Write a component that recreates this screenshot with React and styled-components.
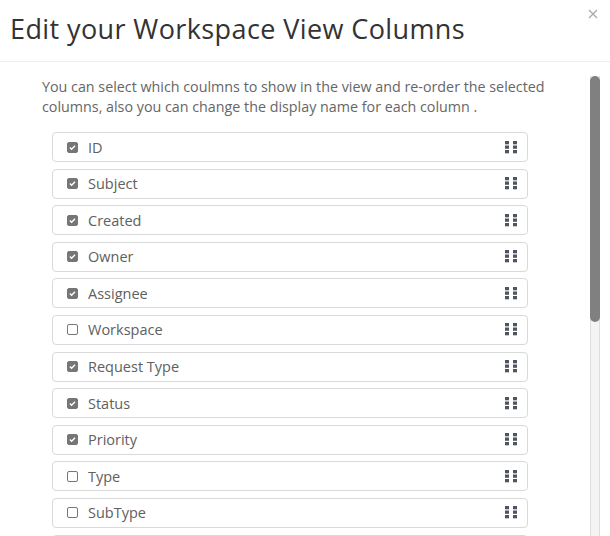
import React, { useState } from "react";
import styled, { createGlobalStyle } from "styled-components";

const GlobalStyle = createGlobalStyle`
    html, body {
        margin: 0;
        padding: 0;
        height: 100%;
        overflow: hidden;
        background: #fff;
        font-family: "Open Sans", "Noto Sans", sans-serif;
    }
    #root {
        height: 100%;
    }
`;

const initialColumns = [
    { name: "ID", checked: true },
    { name: "Subject", checked: true },
    { name: "Created", checked: true },
    { name: "Owner", checked: true },
    { name: "Assignee", checked: true },
    { name: "Workspace", checked: false },
    { name: "Request Type", checked: true },
    { name: "Status", checked: true },
    { name: "Priority", checked: true },
    { name: "Type", checked: false },
    { name: "SubType", checked: false },
    { name: "Category", checked: false },
    { name: "Due Date", checked: false },
    { name: "Last Updated", checked: false },
    { name: "Closed", checked: false },
    { name: "Source", checked: false },
    { name: "Tags", checked: false },
    { name: "Department", checked: false },
    { name: "Location", checked: false },
    { name: "Requester", checked: false },
    { name: "SLA", checked: false },
    { name: "Resolution", checked: false },
];

const DragHandle = () => (
    <svg width="12" height="13" viewBox="0 0 12 13">
        {[0, 4.5, 9].map((y) =>
            [0, 8].map((x) => (
                <rect key={`${x}-${y}`} x={x} y={y} width="4" height="3.3" fill="#4f5560" />
            ))
        )}
    </svg>
);

const CloseIcon = () => (
    <svg width="10" height="10" viewBox="0 0 10 10">
        <path d="M1 1l8 8M9 1l-8 8" stroke="#a8a8a8" strokeWidth="1.3" />
    </svg>
);

const App = () => {
    const [columns, setColumns] = useState(initialColumns);

    const toggle = (name) =>
        setColumns((cols) =>
            cols.map((c) => (c.name === name ? { ...c, checked: !c.checked } : c))
        );

    return (
        <Modal>
            <GlobalStyle />
            <Header>
                <Title>Edit your Workspace View Columns</Title>
                <CloseButton aria-label="close">
                    <CloseIcon />
                </CloseButton>
            </Header>
            <BodyWrap>
                <Body>
                    <Description>
                        You can select which coulmns to show in the view and re-order the
                        selected columns, also you can change the display name for each
                        column .
                    </Description>
                    <List>
                        {columns.map((col) => (
                            <Row key={col.name}>
                                <Check
                                    type="checkbox"
                                    checked={col.checked}
                                    onChange={() => toggle(col.name)}
                                />
                                <Label>{col.name}</Label>
                                <DragHandle />
                            </Row>
                        ))}
                    </List>
                </Body>
                <ScrollTrack>
                    <ScrollThumb />
                </ScrollTrack>
            </BodyWrap>
        </Modal>
    );
};

export default App;

const Modal = styled.div`
    display: flex;
    flex-direction: column;
    height: 100%;
    background: #fff;
`;

const Header = styled.div`
    position: relative;
    display: flex;
    align-items: center;
    height: 61px;
    padding: 0 10px;
    border-bottom: 1px solid #eceeef;
`;

const Title = styled.h1`
    margin: 0 0 5px;
    font-size: 27px;
    font-weight: 400;
    color: #333;
    letter-spacing: 0.4px;
`;

const CloseButton = styled.button`
    position: absolute;
    top: 9px;
    right: 12px;
    display: flex;
    border: 0;
    background: none;
    padding: 0;
    cursor: pointer;
`;

const BodyWrap = styled.div`
    position: relative;
    flex: 1;
    min-height: 0;
    padding: 0 20px 0 10px;
`;

const Body = styled.div`
    height: 100%;
    overflow: hidden;
    padding: 15px 0 16px 32px;
    box-sizing: border-box;
`;

const ScrollTrack = styled.div`
    position: absolute;
    top: 14px;
    bottom: 0;
    right: 10px;
    width: 10px;
    box-sizing: border-box;
    background: #f4f4f4;
    border-left: 1px solid #dedede;
    border-right: 1px solid #dedede;
`;

const ScrollThumb = styled.div`
    margin: 0 -1px;
    height: 246px;
    border-radius: 5px;
    background: #808080;
`;

const Description = styled.p`
    margin: 0 0 15px;
    max-width: 512px;
    font-size: 14.3px;
    line-height: 20px;
    color: #666;
`;

const List = styled.div`
    display: flex;
    flex-direction: column;
    gap: 6.6px;
    margin-left: 10px;
    width: 476px;
`;

const Row = styled.div`
    display: flex;
    align-items: center;
    height: 30px;
    box-sizing: border-box;
    padding: 0 10px 0 14px;
    border: 1px solid #d9d9d9;
    border-radius: 4px;
    background: #fff;
`;

const Check = styled.input`
    appearance: none;
    margin: 0 10px 0 0;
    width: 11px;
    height: 11px;
    box-sizing: border-box;
    border: 1px solid #777;
    border-radius: 2px;
    background: #fff;
    cursor: pointer;

    &:checked {
        background: #767676
            url("data:image/svg+xml;utf8,<svg xmlns='http://www.w3.org/2000/svg' viewBox='0 0 11 11'><path d='M2.3 5.6l2.1 2.1 4.2-4.4' fill='none' stroke='white' stroke-width='1.7'/></svg>")
            center / 100% no-repeat;
        border-color: #767676;
    }
`;

const Label = styled.span`
    flex: 1;
    font-size: 14.5px;
    color: #606060;
`;
